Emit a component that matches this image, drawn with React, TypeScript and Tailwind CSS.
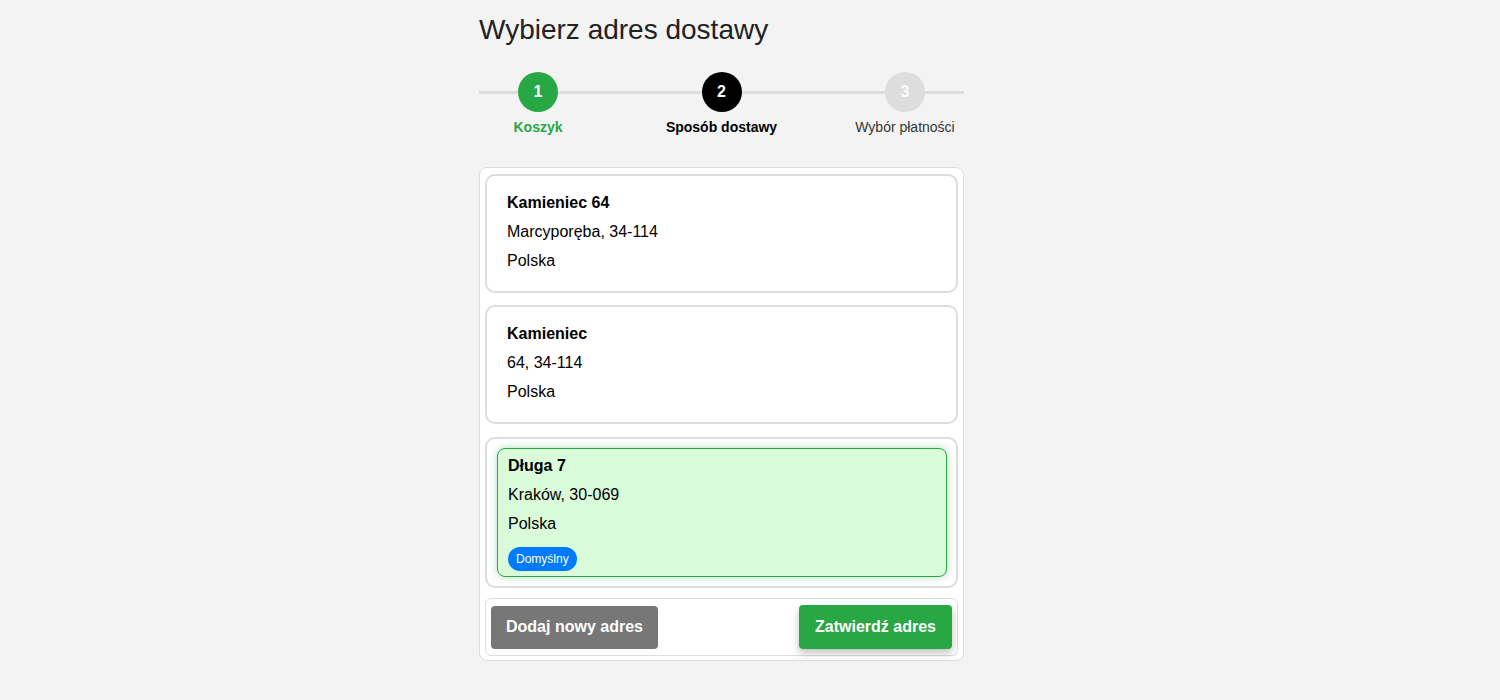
const addresses = [
  { street: "Kamieniec 64", city: "Marcyporęba, 34-114", country: "Polska", selected: false, isDefault: false },
  { street: "Kamieniec", city: "64, 34-114", country: "Polska", selected: false, isDefault: false },
  { street: "Długa 7", city: "Kraków, 30-069", country: "Polska", selected: true, isDefault: true },
];

const steps = [
  { n: 1, label: "Koszyk", circle: "bg-[#28a745]", text: "font-bold text-[#28a745]" },
  { n: 2, label: "Sposób dostawy", circle: "bg-black", text: "font-bold text-black" },
  { n: 3, label: "Wybór płatności", circle: "bg-[#dddddd]", text: "font-normal text-[#333]" },
];

function AddressLines({ a }: { a: (typeof addresses)[number] }) {
  return (
    <>
      <p className="font-bold leading-[29px]">{a.street}</p>
      <p className="leading-[29px]">{a.city}</p>
      <p className="leading-[29px]">{a.country}</p>
    </>
  );
}

export default function App() {
  return (
    <div className="min-h-[700px] bg-[#f3f3f3] font-['Liberation_Sans',Arial,sans-serif] text-black">
      <div className="ml-[479px] w-[485px] pt-[14px]">
        <h1 className="text-[28px] leading-[32px] text-[#222]">Wybierz adres dostawy</h1>

        <div className="relative mt-[26px] flex justify-between">
          <div className="absolute left-0 right-0 top-[19px] h-[3px] bg-[#dddddd]" />
          {steps.map((s) => (
            <div key={s.n} className="relative flex w-[118px] flex-col items-center">
              <div className={`flex h-10 w-10 items-center justify-center rounded-full text-[16px] font-bold text-white ${s.circle}`}>{s.n}</div>
              <div className={`mt-[7px] whitespace-nowrap text-[14px] leading-[16px] ${s.text}`}>{s.label}</div>
            </div>
          ))}
        </div>

        <div className="mt-[32px] rounded-[8px] border border-[#dddddd] bg-white px-[5px] pb-[4px] pt-[6px]">
          <div className="flex flex-col gap-[12px]">
            {addresses.map((a) =>
              a.selected ? (
                <div key={a.street} className="mt-[1px] rounded-[10px] border-2 border-[#dddddd] bg-white px-[9px] pb-[9px] pl-[10px] pt-[9px]">
                  <div className="rounded-[8px] border border-[#28a745] bg-[#d9fbd9] px-[10px] pb-[5px] pt-[2px] text-[16px] shadow-[0_0_8px_rgba(40,167,69,0.35)]">
                    <AddressLines a={a} />
                    <span className="mt-[9px] inline-flex h-6 items-center rounded-full bg-[#007bff] px-2 text-[12px] text-white">Domyślny</span>
                  </div>
                </div>
              ) : (
                <div key={a.street} className="rounded-[10px] border-2 border-[#dddddd] bg-white px-5 pb-[16px] pt-[12px] text-[16px]">
                  <AddressLines a={a} />
                </div>
              )
            )}
          </div>

          <div className="mt-[10px] flex items-center justify-between rounded-[6px] border border-[#dddddd] bg-white px-[5px] py-[6px]">
            <button className="h-[43px] rounded-[4px] bg-[#777777] px-[15px] text-[16px] font-bold text-white">Dodaj nowy adres</button>
            <button className="h-[44px] rounded-[4px] bg-[#28a745] px-4 text-[16px] font-bold text-white shadow-[0_4px_8px_rgba(0,0,0,0.25)]">Zatwierdź adres</button>
          </div>
        </div>
      </div>
    </div>
  );
}
